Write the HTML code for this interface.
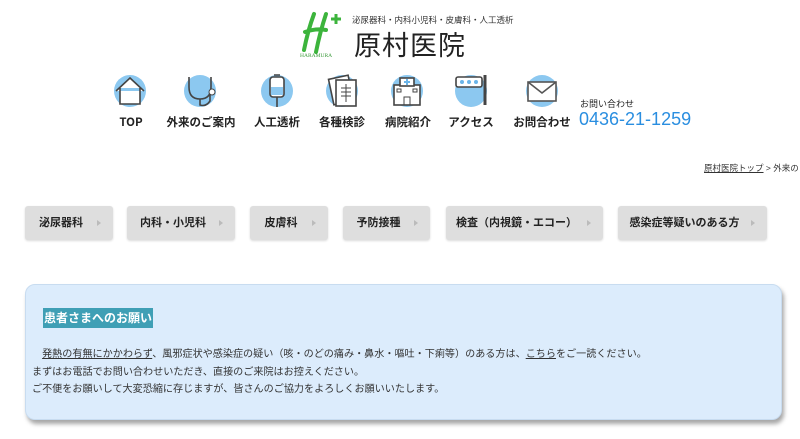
<!DOCTYPE html>
<html><head><meta charset="utf-8"><style>
*{margin:0;padding:0;box-sizing:border-box}
body{width:800px;height:439px;background:#fff;font-family:"Liberation Sans","Noto Sans CJK JP",sans-serif;color:#222;position:relative;overflow:hidden}
.a{position:absolute}
.ic{position:absolute;width:32px;height:32px;border-radius:50%;background:#8cc8f0;top:75px}
.ic svg{position:absolute;left:-4px;top:-4px}
.lb{position:absolute;top:114px;height:16px;line-height:16px;font-size:11.5px;font-weight:bold;white-space:nowrap;transform:translateX(-50%);font-family:"Noto Sans CJK JP","Liberation Sans",sans-serif}
.bt{position:absolute;top:206px;height:34px;background:#dedede;border-radius:3px;font-size:11px;font-weight:bold;line-height:34px;text-align:center;box-shadow:0 1px 2px rgba(0,0,0,.15)}
.bt::after{content:"";position:absolute;right:12px;top:14px;border-left:4px solid #bbb;border-top:3px solid transparent;border-bottom:3px solid transparent}
</style></head><body>
<div class="a" style="left:296px;top:10px;width:50px;height:48px">
<svg width="50" height="48"><path d="M18 4 Q12 20 8 40 M30 4 Q24 22 20 42 M9 22 Q20 18 30 20" stroke="#3cb43c" stroke-width="4" fill="none" stroke-linecap="round"/><path d="M40 4v10M35 9h10" stroke="#3cb43c" stroke-width="3"/><text x="4" y="47" font-size="5.5" fill="#3a9a3a" font-family="Liberation Serif">HARAMURA</text></svg></div>
<div class="a" style="left:352px;top:14px;font-size:8.5px;color:#333">泌尿器科・内科小児科・皮膚科・人工透析</div>
<div class="a" style="left:354px;top:24px;font-size:27px;letter-spacing:1px;color:#222">原村医院</div>

<div class="ic" style="left:114px"><svg width="40" height="40"><path d="M6 20 L20 7 L34 20 M10 17 V33 H30 V17" stroke="#444" stroke-width="1.6" fill="#fff"/></svg></div>
<div class="ic" style="left:184px"><svg width="40" height="40"><path d="M9 6 V16 Q9 28 20 28 Q31 28 31 16 V6 M20 28 V34 Q26 36 30 30 V24" stroke="#444" stroke-width="1.6" fill="none"/><circle cx="32" cy="21" r="3" stroke="#444" fill="#fff"/></svg></div>
<div class="ic" style="left:261px"><svg width="40" height="40"><rect x="13" y="6" width="14" height="20" rx="3" stroke="#444" stroke-width="1.6" fill="#fff"/><path d="M14 16h12v8h-12z" fill="#8cc8f0"/><path d="M20 26v10M17 4h6" stroke="#444" stroke-width="1.6"/></svg></div>
<div class="ic" style="left:326px"><svg width="40" height="40"><rect x="9" y="6" width="20" height="26" stroke="#444" stroke-width="1.6" fill="#fff" transform="rotate(-12 19 19)"/><rect x="14" y="9" width="20" height="26" stroke="#444" stroke-width="1.6" fill="#fff"/><path d="M24 13v18M19 17h10M19 21h10M19 25h10" stroke="#444"/></svg></div>
<div class="ic" style="left:391px"><svg width="40" height="40"><rect x="7" y="14" width="26" height="20" stroke="#444" stroke-width="1.6" fill="#fff"/><rect x="13" y="7" width="14" height="8" stroke="#444" stroke-width="1.6" fill="#fff"/><path d="M20 8v6M17 11h6" stroke="#6ab4e8" stroke-width="2"/><path d="M17 26h6v8h-6z" stroke="#444" fill="none"/><rect x="10" y="18" width="4" height="3" stroke="#444" fill="none"/><rect x="26" y="18" width="4" height="3" stroke="#444" fill="none"/></svg></div>
<div class="ic" style="left:455px"><svg width="40" height="40"><rect x="5" y="6" width="26" height="10" rx="2" stroke="#444" stroke-width="1.6" fill="#fff"/><circle cx="11" cy="11" r="2" fill="#6ab4e8"/><circle cx="18" cy="11" r="2" fill="#6ab4e8"/><circle cx="25" cy="11" r="2" fill="#6ab4e8"/><path d="M34 4v30" stroke="#444" stroke-width="3"/></svg></div>
<div class="ic" style="left:526px"><svg width="40" height="40"><rect x="6" y="11" width="28" height="19" stroke="#555" stroke-width="1.6" fill="#fff"/><path d="M6 11l14 11 14-11" stroke="#555" stroke-width="1.6" fill="none"/></svg></div>

<div class="lb" style="left:131px">TOP</div>
<div class="lb" style="left:201px">外来のご案内</div>
<div class="lb" style="left:277px">人工透析</div>
<div class="lb" style="left:342px">各種検診</div>
<div class="lb" style="left:408px">病院紹介</div>
<div class="lb" style="left:471px">アクセス</div>
<div class="lb" style="left:542px">お問合わせ</div>
<div class="a" style="left:580px;top:97px;font-size:9px">お問い合わせ</div>
<div class="a" style="left:579px;top:109px;font-size:18px;color:#2a8ee0">0436-21-1259</div>
<div class="a" style="left:704px;top:162px;font-size:8.5px;color:#333"><span style="text-decoration:underline">原村医院トップ</span> &gt; 外来の</div>

<div class="bt" style="left:25px;width:88px;padding-right:16px">泌尿器科</div>
<div class="bt" style="left:127px;width:108px;padding-right:16px">内科・小児科</div>
<div class="bt" style="left:250px;width:78px;padding-right:16px">皮膚科</div>
<div class="bt" style="left:343px;width:87px;padding-right:16px">予防接種</div>
<div class="bt" style="left:446px;width:157px;padding-right:16px">検査（内視鏡・エコー）</div>
<div class="bt" style="left:618px;width:149px;padding-right:16px">感染症等疑いのある方</div>

<div class="a" style="left:25px;top:284px;width:757px;height:136px;background:#dcecfc;border:1px solid #c8dcf0;border-radius:10px;box-shadow:2px 4px 4px rgba(0,0,0,.35)">
<div class="a" style="left:17px;top:23px;background:#3f9fb5;color:#fff;font-size:12px;font-weight:bold;padding:2px 1px;line-height:16px">患者さまへのお願い</div>
<div class="a" style="left:6px;top:61px;font-size:10.1px;line-height:17.5px;color:#333;white-space:nowrap">　<span style="text-decoration:underline">発熱の有無にかかわらず</span>、風邪症状や感染症の疑い（咳・のどの痛み・鼻水・嘔吐・下痢等）のある方は、<span style="text-decoration:underline">こちら</span>をご一読ください。<br>まずはお電話でお問い合わせいただき、直接のご来院はお控えください。<br>ご不便をお願いして大変恐縮に存じますが、皆さんのご協力をよろしくお願いいたします。</div>
</div>
</body></html>
